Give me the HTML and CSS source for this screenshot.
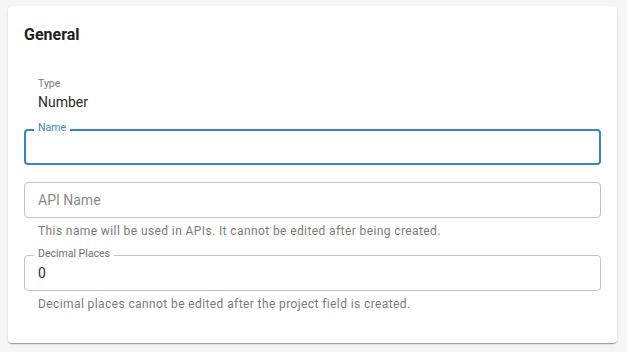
FILE: index.html
```html
<!DOCTYPE html>
<html lang="en">
<head>
    <meta charset="UTF-8">
    <meta name="viewport" content="width=device-width, initial-scale=1.0">
    <title>Project Field</title>
    <link rel="stylesheet" href="styles.css">
</head>
<body>
    <div class="card">
        <h2>General</h2>

        <div class="readonly">
            <div class="readonly-label">Type</div>
            <div class="readonly-value">Number</div>
        </div>

        <div class="field field-first">
            <label class="field-label focused-label" for="name">Name</label>
            <input class="field-input focused" type="text" id="name" name="name">
        </div>

        <div class="field">
            <input class="field-input" type="text" id="apiName" name="apiName" placeholder="API Name">
        </div>
        <div class="helper">This name will be used in APIs. It cannot be edited after being created.</div>

        <div class="field">
            <label class="field-label" for="decimals">Decimal Places</label>
            <input class="field-input" type="text" id="decimals" name="decimals" value="0">
        </div>
        <div class="helper">Decimal places cannot be edited after the project field is created.</div>
    </div>
</body>
</html>
```

FILE: styles.css
```css
body {
    font-family: Roboto, "Liberation Sans", sans-serif;
    background-color: #f6f6f6;
    margin: 0;
    padding: 6px 10px 8px 8px;
}
.card {
    background: #fff;
    border-radius: 4px;
    box-shadow: 0 2px 1px -1px rgba(0, 0, 0, 0.2), 0 1px 1px 0 rgba(0, 0, 0, 0.14), 0 1px 3px 0 rgba(0, 0, 0, 0.12);
    padding: 17px 16px 31px 16px;
}
h2 {
    margin: 0;
    font-size: 16px;
    line-height: 24px;
    font-weight: 700;
    color: #212121;
}
.readonly {
    margin-top: 29px;
    padding-left: 14px;
}
.readonly-label {
    font-size: 10.5px;
    line-height: 16px;
    color: #757575;
}
.readonly-value {
    font-size: 14px;
    line-height: 20px;
    color: #2b2b2b;
}
.field {
    position: relative;
    margin-top: 17px;
}
.field-first {
    margin-top: 17px;
}
.helper + .field {
    margin-top: 16px;
}
.field-label {
    position: absolute;
    top: -7px;
    left: 10px;
    padding: 0 4px;
    background: #fff;
    font-size: 10.5px;
    line-height: 12px;
    color: #6f6f6f;
}
.focused-label {
    color: #3a86c3;
}
.field-input {
    display: block;
    width: 100%;
    box-sizing: border-box;
    height: 36px;
    padding: 0 13px;
    border: 1px solid #c4c4c4;
    border-radius: 4px;
    font-family: inherit;
    font-size: 14px;
    color: #2b2b2b;
    background: #fff;
    outline: none;
}
.field-input::placeholder {
    color: #8a8a8a;
}
.focused {
    border: 2px solid #3784c0;
    padding: 0 12px;
}
.helper {
    margin-top: 5px;
    padding-left: 14px;
    font-size: 12px;
    line-height: 16px;
    letter-spacing: 0.4px;
    color: #7a7a7a;
}
```
